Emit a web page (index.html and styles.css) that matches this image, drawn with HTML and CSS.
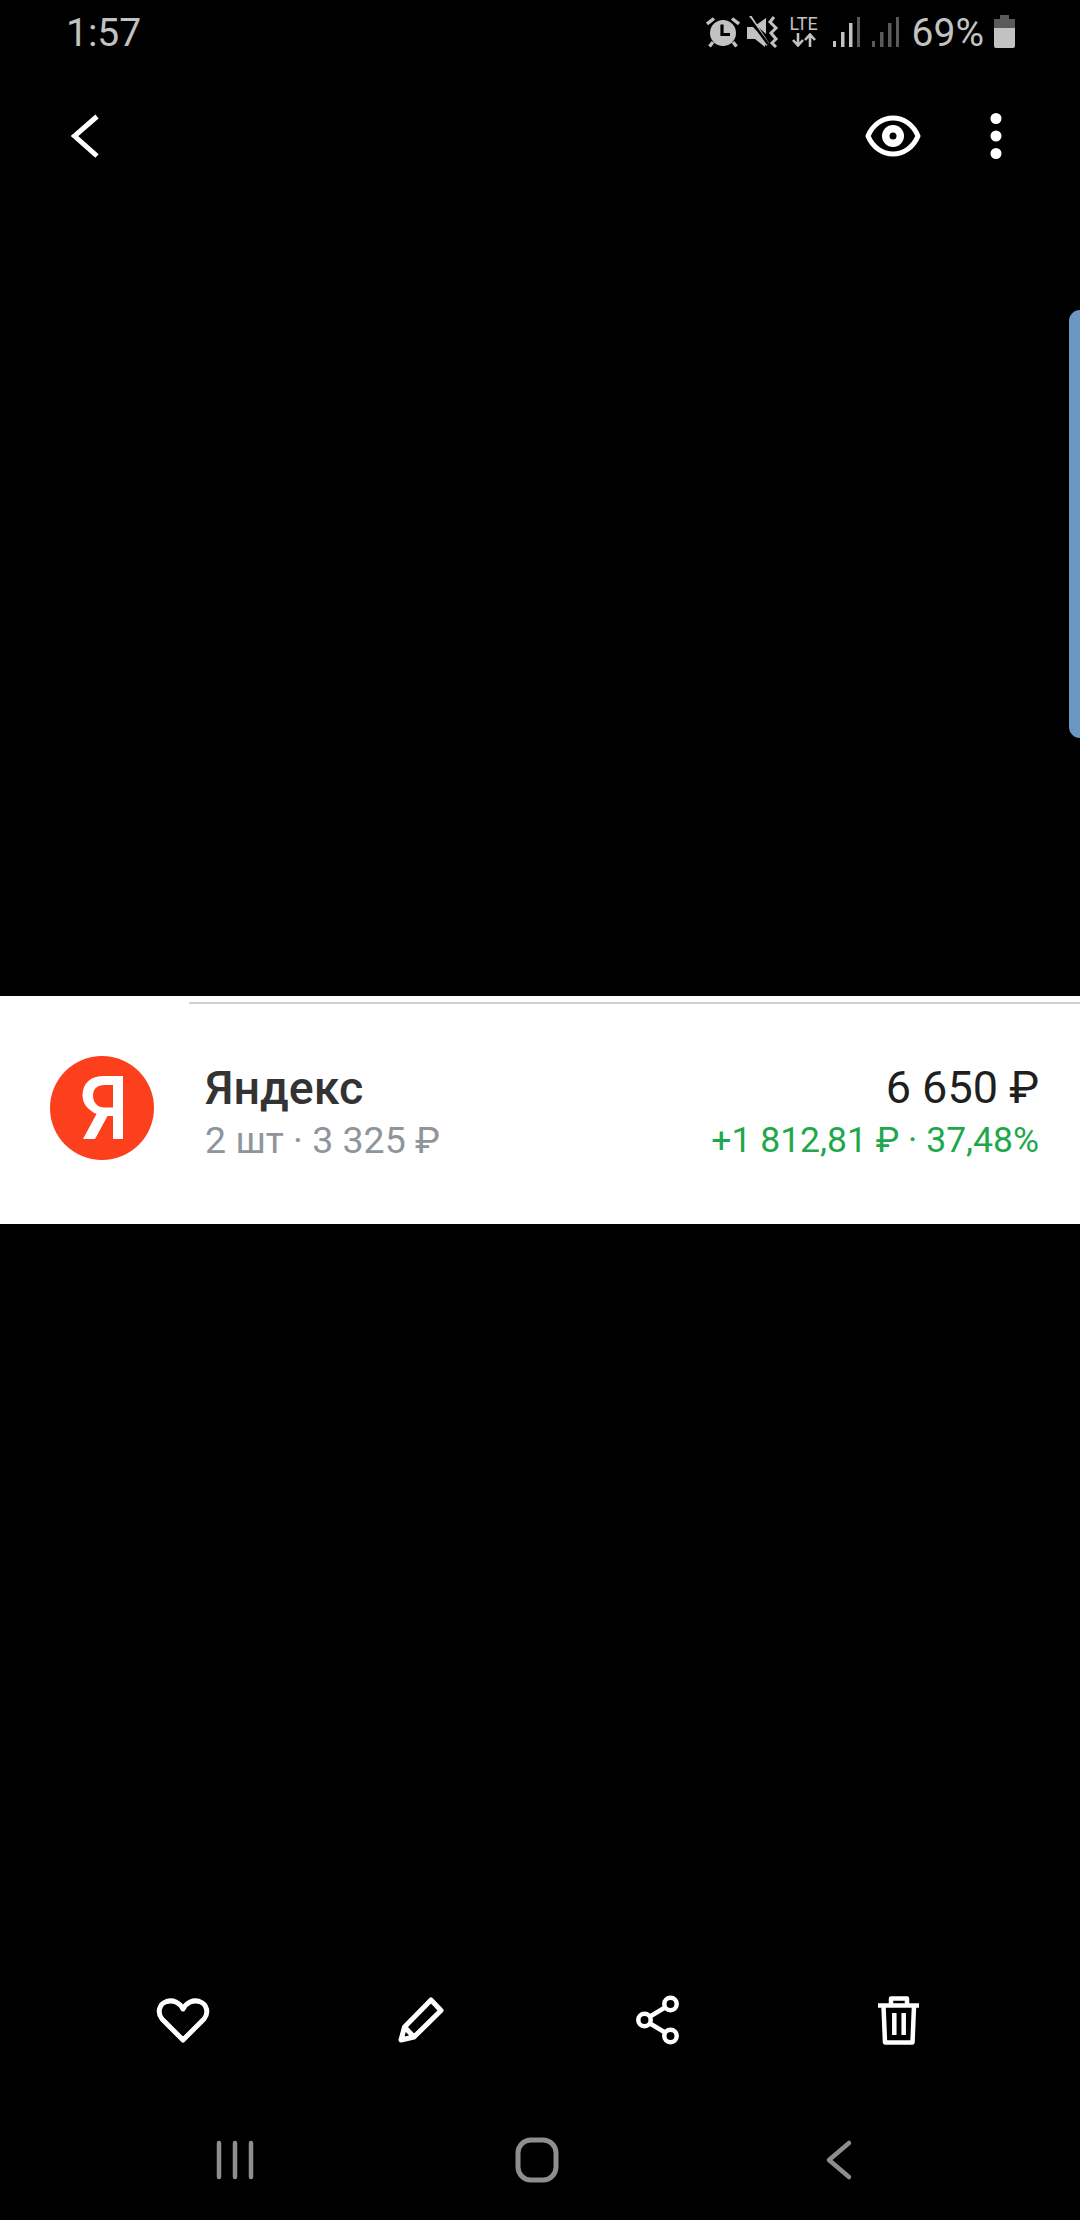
FILE: index.html
```html
<!DOCTYPE html>
<html lang="ru">
<head>
<meta charset="utf-8">
<title>Яндекс</title>
<link rel="stylesheet" href="styles.css">
</head>
<body>
<div class="screen">
  <header class="status">
    <span class="time">1:57</span>
    <div class="status-right">
      <svg class="st-alarm" width="34" height="32" viewBox="0 0 34 32"><g fill="none" stroke="#c2c2c2" stroke-width="3.4"><path d="M1 8 8 2.500M33 8 26 2.500M7 26 3.500 30.500M27 26 30.500 30.500"/></g><circle cx="17" cy="17" r="13" fill="#c2c2c2"/><path d="M16 8.500V18.500H24" fill="none" stroke="#000" stroke-width="3.200"/></svg>
      <svg class="st-mute" width="32" height="32" viewBox="0 0 32 32"><path d="M0 11H6L18 23V31L8 23H0ZM2 1 4 -1 22 27 19 30Z" fill="#c2c2c2"/><path d="M9 9 19 2V18Z" fill="#c2c2c2"/><path d="M2 2 21 28" stroke="#000" stroke-width="2.500"/><path d="M27 1 23 6 29 12 24 17 29 23 25 27 29 31" fill="none" stroke="#c2c2c2" stroke-width="3"/></svg>
      <div class="st-lte">
        <span class="lte-text">LTE</span>
        <svg width="24" height="14" viewBox="0 0 24 14"><path d="M6 0V12M1 7 6 12.500 11 7M18 14V2M13 7 18 1.500 23 7" fill="none" stroke="#c2c2c2" stroke-width="2.600"/></svg>
      </div>
      <svg class="st-sig1" width="27" height="30" viewBox="0 0 27 30"><path d="M0 24h3v6H0zM8 15h3.500v15H8zM16 6h3.500v24H16z" fill="#c2c2c2"/><path d="M24 0h3.500v30H24z" fill="#5a5a5a"/></svg>
      <svg class="st-sig2" width="27" height="30" viewBox="0 0 27 30"><path d="M0 24h3v6H0zM8 15h3.500v15H8zM16 6h3.500v24H16zM24 0h3.500v30H24z" fill="#5a5a5a"/></svg>
      <span class="pct">69%</span>
      <svg class="st-batt" width="21" height="33" viewBox="0 0 21 33"><path d="M6 0H15V4H21V13H0V4H6Z" fill="#5a5a5a"/><path d="M0 13H21V31Q21 33 19 33H2Q0 33 0 31Z" fill="#c2c2c2"/></svg>
    </div>
  </header>

  <nav class="toolbar">
    <svg width="40" height="60" viewBox="0 0 40 60"><path d="M29 10.500 6.500 30 29 50" fill="none" stroke="#fff" stroke-width="5"/></svg>
    <div class="toolbar-right">
      <svg width="60" height="60" viewBox="0 0 60 60"><path d="M5 30C15 6 45 6 55 30 45 54 15 54 5 30Z" fill="none" stroke="#fff" stroke-width="5" stroke-linejoin="round"/><circle cx="30" cy="30" r="11" fill="#fff"/><circle cx="30" cy="30" r="3.500" fill="#000"/></svg>
      <svg width="12" height="60" viewBox="0 0 12 60"><circle cx="6" cy="12.500" r="5.500" fill="#fff"/><circle cx="6" cy="30" r="5.500" fill="#fff"/><circle cx="6" cy="47.500" r="5.500" fill="#fff"/></svg>
    </div>
  </nav>

  <div class="viewer viewer-top"></div>

  <section class="card">
    <div class="card-line"></div>
    <div class="row">
      <svg class="logo" width="104" height="104" viewBox="0 0 104 104"><circle cx="52" cy="52" r="52" fill="#fc3f1d"/><path fill-rule="evenodd" d="M73 20V83H63V60H57.500L45 83H33L46.500 58C38 54 32.500 48 32.500 39 32.500 27 41 20 54 20ZM63 29H54.500C47.500 29 43 33 43 39.500 43 47 48 51.500 54.500 51.500H63Z" fill="#fff"/></svg>
      <div class="info">
        <div class="name">Яндекс</div>
        <div class="sub">2 шт · 3 325 ₽</div>
      </div>
      <div class="values">
        <div class="amount">6 650 ₽</div>
        <div class="gain">+1 812,81 ₽ · 37,48%</div>
      </div>
    </div>
  </section>

  <div class="viewer viewer-bottom"></div>

  <footer class="actions">
    <svg width="60" height="60" viewBox="0 0 60 60"><path d="M30 49 9 28C4 22 6 13 13.500 10.500 20 8.500 26.500 11.500 30 18 33.500 11.500 40 8.500 46.500 10.500 54 13 56 22 51 28Z" fill="none" stroke="#fff" stroke-width="5" stroke-linejoin="round"/></svg>
    <svg width="60" height="60" viewBox="0 0 60 60"><path d="M40 9 50 19.500 23 46 10 49 13.500 36ZM13.500 36 23 46" fill="none" stroke="#fff" stroke-width="5" stroke-linejoin="round"/></svg>
    <svg width="60" height="60" viewBox="0 0 60 60"><g fill="none" stroke="#fff" stroke-width="4.500"><circle cx="15.500" cy="29" r="6.200"/><circle cx="41.500" cy="13" r="6.200"/><circle cx="41.500" cy="45" r="6.200"/><path d="M21 25.500 36 16.500M21 32.500 36 41.500"/></g></svg>
    <svg width="60" height="60" viewBox="0 0 60 60"><g fill="none" stroke="#fff" stroke-width="4.500" stroke-linejoin="round"><path d="M11 14.500H52"/><path d="M16.500 15 18 51.500H45.500L47 15"/><path d="M24 14V7.500H40V14"/><path d="M27.300 22V44M36.700 22V44"/></g></svg>
  </footer>

  <footer class="navbar">
    <svg width="60" height="60" viewBox="0 0 60 60"><path d="M14 13V47M30 13V47M46 13V47" fill="none" stroke="#8e8e8e" stroke-width="4.500" stroke-linecap="round"/></svg>
    <svg width="60" height="60" viewBox="0 0 60 60"><rect x="11" y="10" width="38" height="40" rx="13" fill="none" stroke="#8e8e8e" stroke-width="5"/></svg>
    <svg width="60" height="60" viewBox="0 0 60 60"><path d="M40 13 20 30 40 47" fill="none" stroke="#8e8e8e" stroke-width="4.500" stroke-linecap="round" stroke-linejoin="round"/></svg>
  </footer>

  <div class="edge-handle"></div>
</div>
</body>
</html>
```

FILE: styles.css
```css
* { box-sizing: border-box; }
html, body { margin: 0; padding: 0; background: #000; }
svg { display: block; flex: none; }

.screen {
  position: relative;
  width: 1080px;
  height: 2220px;
  display: flex;
  flex-direction: column;
  overflow: hidden;
  background: #000;
  font-family: Roboto, "Liberation Sans", sans-serif;
}

.status {
  height: 64px;
  display: flex;
  justify-content: space-between;
  align-items: flex-start;
  padding: 11px 65px 0 66px;
  color: #c2c2c2;
  font-size: 39px;
  line-height: 44px;
}
.status-right { display: flex; align-items: flex-start; }
.st-alarm { margin-top: 5px; }
.st-mute { margin: 5px 0 0 7px; }
.st-lte { margin: 4px 0 0 10px; display: flex; flex-direction: column; align-items: center; width: 30px; }
.lte-text { font-size: 18px; line-height: 18px; letter-spacing: 0; }
.st-sig1 { margin: 6px 0 0 14px; }
.st-sig2 { margin: 6px 0 0 12px; }
.pct { margin-left: 13px; }
.st-batt { margin: 4px 0 0 10px; }

.toolbar {
  height: 144px;
  display: flex;
  justify-content: space-between;
  align-items: center;
  padding: 0 78px 0 68px;
}
.toolbar-right { display: flex; align-items: center; gap: 67px; }

.viewer-top { height: 788px; }
.viewer-bottom { flex: 1; }

.card {
  height: 228px;
  display: flex;
  flex-direction: column;
  background: #fff;
  padding-top: 6px;
}
.card-line { height: 2px; margin-left: 189px; background: #d0d0d2; }
.row {
  flex: 1;
  display: flex;
  align-items: center;
  padding: 0 41px 0 50px;
}
.logo { margin: 0 51px 12px 0; }
.info { flex: 1; }
.name { font-size: 46.5px; line-height: 52px; font-weight: 500; color: #333; }
.sub { font-size: 37.5px; line-height: 52px; color: #8f959b; }
.values { text-align: right; }
.amount { font-size: 45px; line-height: 52px; color: #1f1f1f; }
.gain { font-size: 35.5px; line-height: 52px; color: #1fa84b; }

.actions {
  height: 114px;
  display: flex;
  align-items: center;
  gap: 178px;
  padding-left: 153px;
}
.navbar {
  height: 142px;
  display: flex;
  align-items: flex-start;
  gap: 242px;
  padding: 52px 0 0 205px;
}

.edge-handle {
  position: absolute;
  right: 0;
  top: 310px;
  width: 11px;
  height: 428px;
  background: #6c97c3;
  border-radius: 11px 0 0 11px;
}
```
